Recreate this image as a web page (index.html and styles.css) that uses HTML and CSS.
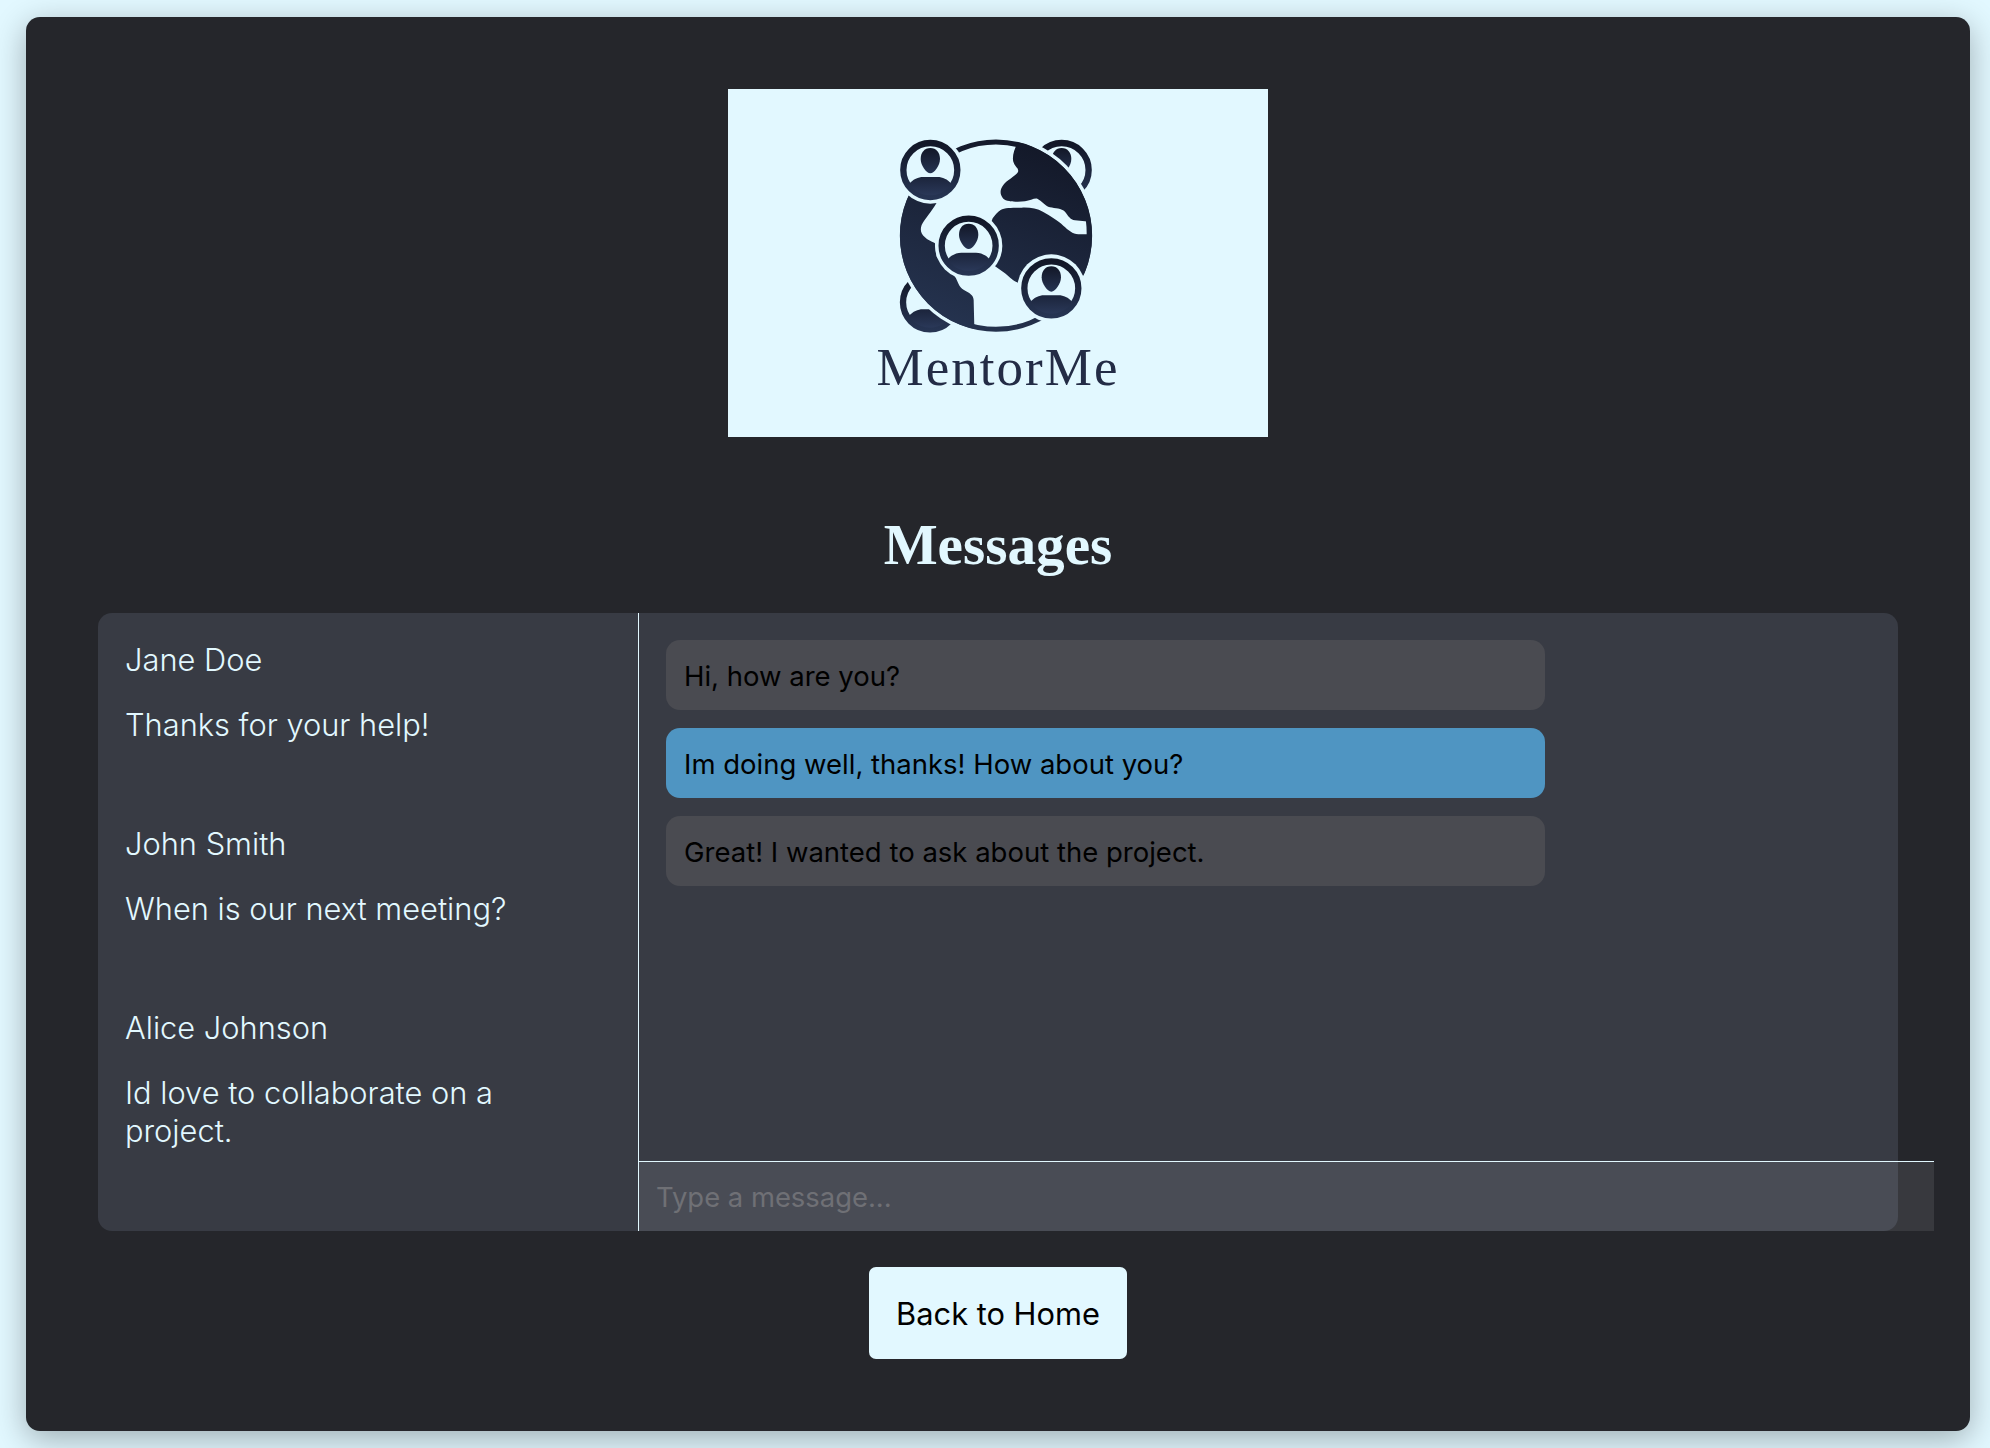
FILE: index.html
```html
<!DOCTYPE html>
<html lang="en">
<head>
<meta charset="UTF-8">
<meta name="viewport" content="width=device-width, initial-scale=1.0">
<title>Messages</title>
<link rel="stylesheet" href="styles.css">
</head>
<body>
<div class="container">
    <svg class="logo" viewBox="0 0 540 348" role="img" aria-label="MentorMe">
        <defs>
            <linearGradient id="navy" x1="0" y1="0" x2="0" y2="1">
                <stop offset="0" stop-color="#121727"/>
                <stop offset="1" stop-color="#263452"/>
            </linearGradient>
            <linearGradient id="shoulders" gradientUnits="userSpaceOnUse" x1="0" y1="20" x2="0" y2="76">
                <stop offset="0" stop-color="#1b243b"/>
                <stop offset="1" stop-color="#2a3858"/>
            </linearGradient>
            <linearGradient id="globe-fill" gradientUnits="userSpaceOnUse" x1="420" y1="30" x2="220" y2="600">
                <stop offset="0" stop-color="#131828"/>
                <stop offset="1" stop-color="#25334f"/>
            </linearGradient>
            <clipPath id="person-clip"><circle r="76"/></clipPath>
            <clipPath id="globe-clip"><circle cx="318" cy="317" r="288"/></clipPath>
            <g id="person-top">
                <circle r="81" fill="none" stroke="url(#navy)" stroke-width="19"/>
                <path d="M0,-66 C18,-66 29,-52 29,-33 C29,-14 12,10 0,10 C-12,10 -29,-14 -29,-33 C-29,-52 -18,-66 0,-66Z" fill="url(#navy)"/>
            </g>
            <g id="person">
                <use href="#person-top"/>
                <path d="M-62,40 C-52,28 -36,21 -22,21 L22,21 C36,21 52,28 62,40 L62,90 L-62,90Z" fill="url(#shoulders)" clip-path="url(#person-clip)"/>
            </g>
        </defs>
        <g transform="translate(162 41) scale(0.3333)">
            <use href="#person-top" x="515" y="120"/>
            <use href="#person" x="120" y="517"/>
            <circle cx="318" cy="317" r="299" fill="#e2f8ff"/>
            <circle cx="318" cy="317" r="281" fill="none" stroke="url(#globe-fill)" stroke-width="15"/>
            <g clip-path="url(#globe-clip)" fill="url(#globe-fill)">
                <path d="M382,40 C372,60 366,80 370,95 C374,110 388,115 384,126 C375,140 350,150 340,165 C330,178 328,192 340,206 C350,216 385,216 405,214 C420,212 432,204 442,206 C455,212 465,228 480,232 C495,235 515,235 525,245 C535,258 540,268 555,271 L600,275 L660,275 L660,0 L382,0Z"/>
                <path d="M590,313 L565,313 C548,312 535,300 520,287 C505,272 480,258 460,246 C440,235 420,232 395,233 C375,234 345,232 332,240 C322,246 315,255 308,265 L280,340 L310,405 L345,430 C360,442 372,456 385,458 L500,470 L660,400 L660,275 L590,275Z"/>
                <path d="M140,218 C125,245 105,265 95,285 C90,298 92,312 105,322 C115,332 130,336 135,340 L140,380 L195,440 C205,455 205,470 222,480 C240,490 250,495 251,510 L253,590 L253,660 L0,660 L0,120 L121,120Z"/>
            </g>
            <circle cx="121" cy="120" r="101" fill="#e2f8ff"/>
            <circle cx="236" cy="347" r="101" fill="#e2f8ff"/>
            <circle cx="484" cy="475" r="102" fill="#e2f8ff"/>
            <use href="#person" x="121" y="120"/>
            <use href="#person" x="236" y="347"/>
            <use href="#person" x="484" y="475"/>
        </g>
        <text class="logo-text" x="269" y="296" text-anchor="middle" textLength="241">MentorMe</text>
    </svg>

    <h1>Messages</h1>

    <div class="chat-box">
        <div class="sidebar">
            <div class="conversation">
                <p>Jane Doe</p>
                <p>Thanks for your help!</p>
            </div>
            <div class="conversation">
                <p>John Smith</p>
                <p>When is our next meeting?</p>
            </div>
            <div class="conversation">
                <p>Alice Johnson</p>
                <p>Id love to collaborate on a project.</p>
            </div>
        </div>
        <div class="chat-area">
            <div class="messages">
                <div class="message">Hi, how are you?</div>
                <div class="message sent">Im doing well, thanks! How about you?</div>
                <div class="message">Great! I wanted to ask about the project.</div>
            </div>
            <input type="text" class="chat-input" placeholder="Type a message...">
        </div>
    </div>

    <a class="back-button" href="#">Back to Home</a>
</div>
</body>
</html>
```

FILE: styles.css
```css
* {
    box-sizing: border-box;
}

body {
    margin: 0;
    min-height: 1448px;
    padding: 17px 20px 17px 26px;
    background-color: #e2f8ff;
    font-family: Inter, "Noto Sans", sans-serif;
}

.container {
    display: flex;
    flex-direction: column;
    align-items: center;
    height: 1414px;
    padding: 72px;
    border-radius: 14px;
    background-color: #25262b;
    box-shadow: 0 8px 32px rgba(0, 0, 0, 0.3);
}

.logo {
    display: block;
    flex: none;
    width: 540px;
    height: 348px;
    background-color: #e2f8ff;
}

.logo-text {
    font-family: "Liberation Serif", serif;
    font-size: 53px;
    fill: #232c46;
}

h1 {
    margin: 75px 0 35px;
    color: #e2f8ff;
    font-family: "Liberation Serif", serif;
    font-size: 57.2px;
    font-weight: bold;
    line-height: 66px;
}

.chat-box {
    display: flex;
    flex: none;
    width: 1800px;
    height: 618px;
    border-radius: 14px;
    background-color: #383b44;
}

.sidebar {
    flex: none;
    width: 541px;
    padding: 28px 40px 27px 27px;
    border-right: 1px solid #e2f8ff;
    color: #e2f8ff;
    font-size: 30.8px;
    font-weight: 300;
    line-height: 38px;
}

.conversation {
    margin-bottom: 81px;
}

.conversation p {
    margin: 0 0 27px;
}

.conversation p:last-child {
    margin-bottom: 0;
}

.chat-area {
    display: flex;
    flex-direction: column;
    flex: none;
    width: 1259px;
}

.messages {
    display: flex;
    flex-direction: column;
    align-items: flex-start;
    gap: 18px;
    flex: 1;
    padding: 27px;
}

.message {
    width: 879px;
    height: 70px;
    padding: 0 18px;
    border-radius: 14px;
    background-color: #4a4b51;
    color: #000;
    font-size: 27.5px;
    line-height: 72px;
}

.message.sent {
    background-color: #4f95c2;
}

.chat-input {
    flex: none;
    width: 1295px;
    height: 70px;
    padding: 0 17px;
    border: none;
    border-top: 1px solid #e2f8ff;
    background-color: rgba(225, 228, 235, 0.1);
    color: #e2f8ff;
    font-family: Inter, "Noto Sans", sans-serif;
    font-size: 27.4px;
}

.chat-input::placeholder {
    color: #6f7075;
    opacity: 1;
}

.back-button {
    flex: none;
    width: 258px;
    height: 92px;
    margin-top: 36px;
    border-radius: 7px;
    background-color: #e2f8ff;
    color: #000;
    font-size: 30.8px;
    line-height: 93px;
    text-align: center;
    text-decoration: none;
}
```
